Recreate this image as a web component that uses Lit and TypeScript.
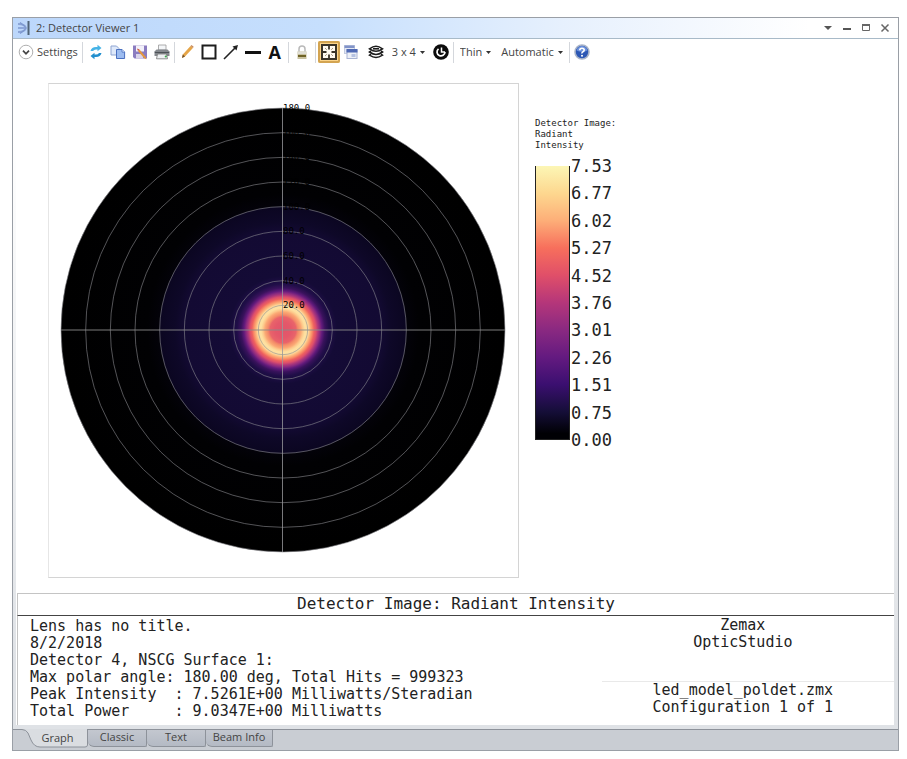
import { LitElement, html, css, svg } from "lit";
import { customElement } from "lit/decorators.js";

const CENTER_X = 234;
const CENTER_Y = 246;
const OUTER = 222;
const RINGS = [20, 40, 60, 80, 100, 120, 140, 160, 180];
const LEGEND = ["7.53", "6.77", "6.02", "5.27", "4.52", "3.76", "3.01", "2.26", "1.51", "0.75", "0.00"];

/* Radiant intensity by radius, as gradient stops over the polar plot. */
const PROFILE: Array<[number, string]> = [
  [0, "#e0556b"], [8, "#e4586a"], [13, "#e9646a"], [15, "#f38a68"], [18, "#fba874"],
  [20, "#fdca8c"], [22, "#fde0a0"], [25, "#fde0a2"], [27, "#fdb77c"], [29, "#fa9068"], [31, "#ee625f"],
  [33, "#dc4e6c"], [35, "#b0387a"], [37, "#8a2a80"], [39, "#611a7b"], [42, "#39125c"],
  [46, "#200e48"], [54, "#140b36"], [98, "#130a33"], [108, "#0e0828"], [123, "#0b0621"],
  [124, "#030209"], [136, "#010103"], [222, "#000000"],
];

const icon = (body: unknown, w = 16, h = 16) =>
  html`<svg width=${w} height=${h} viewBox="0 0 ${w} ${h}" aria-hidden="true">${body}</svg>`;

const icons = {
  app: icon(svg`
    <path d="M1 4q7 0 8 4q-1 4-8 4" fill="none" stroke="#8ba4d6" stroke-width="1.800"/>
    <path d="M1 8h8M3 2.500l5 4M3 13.500l5-4" stroke="#7d98d0" stroke-width="1.300" fill="none"/>
    <path d="M11.500 1v14" stroke="#4f6377" stroke-width="2"/>`),
  chevron: icon(svg`
    <circle cx="8" cy="8" r="6.8" fill="#fff" stroke="#b0b0b0"/>
    <path d="M5 6.600l3 3.200 3-3.200" fill="none" stroke="#444" stroke-width="1.700"/>`),
  refresh: icon(svg`
    <path d="M2.500 7q1-4 5.500-4h1.500V.8L13.500 4l-4 3.300V5.500H8Q6 5.500 5 7z" fill="#46b3e6"/>
    <path d="M13.500 9q-1 4-5.500 4H6.500v2.200L2.500 12l4-3.300v1.800H8q2 0 3-1.500z" fill="#218fce"/>`),
  copy: icon(svg`
    <path d="M1 2h5.500L9 4.500V11H1z" fill="#dfe9fa" stroke="#8fa5d2"/>
    <path d="M6.500 5.500H12l2.600 2.600V14.500H6.500z" fill="#9dbcf0" stroke="#4a70c0"/>
    <path d="M12 5.500v2.600h2.600" fill="#e9f1ff" stroke="#4a70c0" stroke-width=".8"/>`),
  save: icon(svg`
    <path d="M1 1.500h14v13H2.500L1 13z" fill="#8b7cc0"/>
    <rect x="4" y="1.500" width="8" height="6" fill="#f2f0fa"/>
    <rect x="4" y="10" width="7" height="4.500" fill="#d9d4ea"/>
    <path d="M7.500 5.500l6.300 7.500.6 2.200-2.200-1L6 7z" fill="#e6973d"/>
    <path d="M7.500 5.500L6 7 5 4.500z" fill="#c94b3a"/>`),
  print: icon(svg`
    <path d="M4.500 1h7.500v5h-7.500z" fill="#f4f6f8" stroke="#999" stroke-width=".8"/>
    <path d="M2.500 5.500h11l2 2v4.500H.5V7.500z" fill="#84888d"/>
    <path d="M.8 8h14.400v1H.8z" fill="#4d5257"/>
    <path d="M3.500 10h9l1 4.800h-11z" fill="#eef1f3" stroke="#777" stroke-width=".8"/>
    <circle cx="11.800" cy="12.500" r="1.100" fill="#3aa84b"/>`),
  pencil: icon(svg`
    <path d="M3 14l.8-3.400L11.500 2l2.400 1.900L6 12.500z" fill="#e5a548"/>
    <path d="M11.500 2l1-1 2.200 1.800-.8 1.100z" fill="#c88a5c"/>
    <path d="M3 14l.8-3.400L6 12.500z" fill="#71502c"/>`),
  box: icon(svg`<rect x="1.500" y="1.500" width="13" height="13" fill="none" stroke="#1d1d1d" stroke-width="2"/>`),
  arrow: icon(svg`
    <path d="M1 15L12 4" stroke="#222" stroke-width="1.600"/>
    <path d="M15 1l-1.500 5.500L9.500 2.500z" fill="#222"/>`),
  line: icon(svg`<path d="M0 8.500h16" stroke="#111" stroke-width="3"/>`),
  lock: icon(svg`
    <path d="M5 8V5q0-3 3-3t3 3v3" fill="none" stroke="#b9b9b9" stroke-width="1.500"/>
    <rect x="3.500" y="7.500" width="9" height="7.500" fill="#c9c2a0"/>
    <rect x="3.500" y="7.500" width="9" height="2.500" fill="#e0dfd6"/>
    <rect x="4" y="11" width="8" height="2" fill="#6f6326"/>`),
  fit: icon(svg`
    <rect x="1" y="1" width="14" height="14" fill="#fffaf0" stroke="#3b3428" stroke-width="2"/>
    <path d="M8 2v3.500M8 10.500V14M2 8h3.500M10.500 8H14" stroke="#3b3428" stroke-width="1.800"/>
    <path d="M4 4l1.800 1.800M12 4l-1.800 1.800M4 12l1.800-1.800M12 12l-1.800-1.800" stroke="#a89c82" stroke-width="1"/>`),
  cascade: icon(svg`
    <rect x="1.500" y="1.500" width="10" height="8" fill="#e3e8f4" stroke="#c3cbe0"/>
    <rect x="1.500" y="1.500" width="10" height="2.500" fill="#8193c8"/>
    <rect x="4" y="6" width="10" height="8.500" fill="#edf0f7" stroke="#a9b4d4"/>
    <rect x="3.500" y="5" width="11" height="3.500" fill="#4f69b4"/>
    <rect x="8.500" y="10" width="4" height="3" fill="#b5c2e2"/>`),
  layers: icon(svg`
    <g fill="#fff" stroke="#1c1c1c" stroke-width="1.600">
      <path d="M3 10l-1.500 1.200Q5 13.500 8 13.500t6.500-2.300L13 10"/>
      <path d="M3 7L1.500 8Q5 10.500 8 10.500T14.500 8L13 7"/>
      <path d="M1.500 4.800Q5 2.300 8 2.300t6.500 2.500Q11 7.300 8 7.300T1.500 4.800z"/>
    </g><path d="M5 4.800h6" stroke="#1c1c1c" stroke-width="1.600"/>`),
  reset: icon(svg`
    <circle cx="8" cy="8" r="7.800" fill="#0c0c0c"/>
    <path d="M5.500 4.800A4 4 0 1 0 12 8" fill="none" stroke="#fff" stroke-width="1.700"/>
    <path d="M8.500 3.500v4.500h3.500" fill="none" stroke="#fff" stroke-width="1.500"/>`),
  help: icon(svg`
    <circle cx="8" cy="8" r="7" fill="#2c57b4" stroke="#a9b4c8" stroke-width="1.600"/>
    <path d="M2.500 6.500Q4 2 8 2t5.500 4.500Q8 9 2.500 6.500z" fill="#6d92dc"/>
    <path d="M5.800 6.200q0-2 2.200-2t2.200 1.900q0 1.200-1.200 1.700T8 9.500" fill="none" stroke="#fff" stroke-width="1.600"/>
    <circle cx="8" cy="11.700" r="1" fill="#fff"/>`),
  menu: icon(svg`<path d="M1 4h8L5 8z" fill="#555"/>`, 10, 12),
  minimize: icon(svg`<path d="M1 7h8" stroke="#555" stroke-width="2"/>`, 10, 12),
  maximize: icon(svg`<path d="M1.500 2.500h7v6h-7z" fill="none" stroke="#666"/><path d="M1 3h8" stroke="#666" stroke-width="2"/>`, 10, 12),
  close: icon(svg`<path d="M1.500 2.500l7 7M8.500 2.500l-7 7" stroke="#666" stroke-width="1.500"/>`, 10, 12),
  caret: icon(svg`<path d="M0 1h5L2.500 4z" fill="#333"/>`, 5, 5),
};

@customElement("polar-plot")
export class PolarPlot extends LitElement {
  static styles = css`
    :host { display: block; border: 1px solid #d4d4d4; border-left-color: #e6e6e6; }
    svg { display: block; width: 100%; height: auto; }
    .grid { fill: none; stroke: #8a8a90; stroke-opacity: 0.6; stroke-width: 1; }
    .axis-h { stroke: #8a8a8a; stroke-opacity: 0.45; stroke-width: 2; }
    .axis-v { stroke: #97979b; stroke-opacity: 0.8; stroke-width: 1; }
    .tick { font: 9px "DejaVu Sans Mono", monospace; fill: #000; }
  `;

  render() {
    return html`
      <svg viewBox="0 0 469 493" role="img" aria-label="Radiant intensity over polar angle">
        <defs>
          <radialGradient id="profile">
            ${PROFILE.map(([r, c]) => svg`<stop offset=${r / OUTER} stop-color=${c} />`)}
          </radialGradient>
        </defs>
        <circle cx=${CENTER_X} cy=${CENTER_Y} r=${OUTER} fill="url(#profile)" />
        ${RINGS.map((deg) => svg`<circle class="grid" cx=${CENTER_X} cy=${CENTER_Y} r=${(deg / 180) * OUTER} />`)}
        <path class="axis-h" d="M12 246H456" />
        <path class="axis-v" d="M233.500 24V468" />
        ${RINGS.map((deg) => svg`<text class="tick" x=${CENTER_X} y=${CENTER_Y - (deg / 180) * OUTER + 3}>${deg.toFixed(1)}</text>`)}
      </svg>`;
  }
}

@customElement("app-root")
export class AppRoot extends LitElement {
  static styles = css`
    :host {
      display: flex; box-sizing: border-box; min-height: 100vh;
      padding: 17px 8px 8px 12px; background: #fff;
      font: 11px/16px "Open Sans", sans-serif; color: #444;
    }
    svg { display: block; flex: none; }
    button, select {
      appearance: none; border: 0; margin: 0; padding: 0; background: none;
      font: inherit; color: inherit; border-radius: 0;
    }
    .window { flex: 1; min-width: 0; display: flex; flex-direction: column; border: 1px solid #9a9fa6; }
    .titlebar {
      display: flex; align-items: center; height: 20px; padding: 0 8px 0 4px;
      border-bottom: 1px solid #a8bac8;
      background: linear-gradient(90deg, #bcd7fb, #c6dffd 35%, #e6f0fd 62%, #fff 90%);
    }
    .title { flex: 1; margin: 0 0 0 3px; font-size: 11px; font-weight: 400; }
    .controls { display: flex; gap: 9px; }
    .toolbar { display: flex; align-items: center; height: 26px; padding-left: 5px; }
    .settings { display: flex; align-items: center; gap: 3px; margin-right: 2px; }
    .tool { display: grid; place-items: center; width: 22px; height: 22px; }
    .tool.active { background: #fbd48a; box-shadow: inset 0 0 0 2px #d3a451; border-radius: 2px; }
    .letter { font: 700 18px/22px "Open Sans", sans-serif; color: #111; }
    .sep { width: 1px; height: 21px; margin: 0 2px; background: #d4d7dc; }
    .sep.tight { margin: 0 1px; }
    .group { display: flex; align-items: center; margin-left: 3px; }
    .drop { display: flex; align-items: center; gap: 4px; margin: 0 5px; }
    .drop select { field-sizing: content; }
    .body {
      flex: 1; display: flex; flex-direction: column;
      padding: 0 4px 4px 3px; background: linear-gradient(#fff 10%, #dfe2e6 90%);
    }
    .sheet { flex: 1; display: flex; flex-direction: column; background: #fff; color: #222; font-family: "DejaVu Sans Mono", monospace; }
    .view { flex: 1; display: flex; align-items: flex-start; padding: 18px 0 15px 32px; }
    .plot { flex: 0 1 469px; }
    .legend { margin: 35px 0 0 16px; }
    .legend-title { width: 92px; margin: 0; font-size: 9px; line-height: 11px; }
    .scale { display: flex; gap: 1px; margin-top: 15px; }
    .ramp {
      width: 33px; height: 273px; border: solid #222; border-width: 0 1px 1px;
      background: linear-gradient(#fcf6b5, #fdd78f 10%, #fdae78 20%, #f76f5c 30%, #e04f69 40%, #b5367a 50%, #8a2981 60%, #641a80 70%, #3b0f70 80%, #150e38 90%, #000004 98%);
    }
    .ticks {
      display: flex; flex-direction: column; justify-content: space-between;
      list-style: none; margin: -9px 0; padding: 0; font-size: 17px; line-height: 18px;
    }
    .caption {
      margin: 0 0 0 1px; border: solid #c4c4c4; border-width: 1px 0 0 1px;
      border-bottom: 1px solid #444; text-align: center;
      font-size: 16px; font-weight: 400; line-height: 20px; padding-bottom: 1px;
    }
    .facts { display: grid; grid-template-columns: 2fr 1fr; margin-left: 1px; font-size: 15px; line-height: 17px; }
    .report { margin: 0; padding: 2px 0 5px 12px; font: inherit; white-space: pre; border-left: 1px solid #c4c4c4; }
    .origin { display: flex; flex-direction: column; text-align: center; }
    .origin p { margin: 0; padding-right: 10px; }
    .maker { padding-top: 1px; height: 64px; }
    .file { border-top: 1px solid #e9e9e9; }
    .tabs { display: flex; height: 20px; border-top: 1px solid #8d929a; background: #c9cdd3; }
    .tab {
      box-sizing: border-box; height: 17px; width: 59px; text-align: center;
      border: solid #8d929a; border-width: 0 1px 1px 0; border-radius: 0 0 2px 6px;
      background: linear-gradient(#c3c7cf, #b4bac4); line-height: 14px; padding-bottom: 2px;
    }
    .tab.current { position: relative; width: 75px; padding-left: 14px; background: none; border-width: 0; }
    .tab.wide { width: 67px; }
    .tab-shape { position: absolute; left: 0; top: -1px; }
    .tab-label { position: relative; }
  `;

  private tool(name: string, glyph: unknown, active = false) {
    return html`<button class="tool ${active ? "active" : ""}" aria-label=${name}>${glyph}</button>`;
  }

  private drop(name: string, value: string) {
    return html`<label class="drop"><select aria-label=${name}><option>${value}</option></select>${icons.caret}</label>`;
  }

  render() {
    const sep = html`<span class="sep"></span>`;
    const tightSep = html`<span class="sep tight"></span>`;
    return html`
      <main class="window">
        <header class="titlebar">
          ${icons.app}
          <h1 class="title">2: Detector Viewer 1</h1>
          <div class="controls">
            <button aria-label="Window menu">${icons.menu}</button>
            <button aria-label="Minimize">${icons.minimize}</button>
            <button aria-label="Maximize">${icons.maximize}</button>
            <button aria-label="Close">${icons.close}</button>
          </div>
        </header>
        <div class="toolbar" role="toolbar">
          <button class="settings">${icons.chevron}<span>Settings</span></button>
          ${sep}
          ${this.tool("Refresh", icons.refresh)}${this.tool("Copy", icons.copy)}
          ${this.tool("Save", icons.save)}${this.tool("Print", icons.print)}
          ${tightSep}
          ${this.tool("Pencil", icons.pencil)}${this.tool("Rectangle", icons.box)}
          ${this.tool("Arrow", icons.arrow)}${this.tool("Line", icons.line)}
          ${this.tool("Text", html`<span class="letter">A</span>`)}
          ${sep}
          ${this.tool("Lock", icons.lock)}
          ${sep}
          ${this.tool("Fit", icons.fit, true)}${this.tool("Windows", icons.cascade)}
          <div class="group">
            ${this.tool("Layers", icons.layers)}
            ${this.drop("Grid", "3 x 4")}
            ${this.tool("Reset", icons.reset)}
          </div>
          ${tightSep}
          ${this.drop("Line width", "Thin")}${this.drop("Size", "Automatic")}
          ${tightSep}
          ${this.tool("Help", icons.help)}
        </div>
        <div class="body">
          <section class="sheet">
            <div class="view">
              <polar-plot class="plot"></polar-plot>
              <div class="legend">
                <p class="legend-title">Detector Image:<br />Radiant<br />Intensity</p>
                <div class="scale">
                  <div class="ramp"></div>
                  <ul class="ticks">${LEGEND.map((v) => html`<li>${v}</li>`)}</ul>
                </div>
              </div>
            </div>
            <h2 class="caption">Detector Image: Radiant Intensity</h2>
            <div class="facts">
              <pre class="report">${[
                "Lens has no title.",
                "8/2/2018",
                "Detector 4, NSCG Surface 1:",
                "Max polar angle: 180.00 deg, Total Hits = 999323",
                "Peak Intensity  : 7.5261E+00 Milliwatts/Steradian",
                "Total Power     : 9.0347E+00 Milliwatts",
              ].join("\n")}</pre>
              <div class="origin">
                <div class="maker"><p>Zemax</p><p>OpticStudio</p></div>
                <div class="file"><p>led_model_poldet.zmx</p><p>Configuration 1 of 1</p></div>
              </div>
            </div>
          </section>
        </div>
        <nav class="tabs" role="tablist">
          <button class="tab current" role="tab" aria-selected="true">
            <svg class="tab-shape" width="75" height="19" viewBox="0 0 75 19" aria-hidden="true">
              <path d="M0 0H74.500V16.500Q74.500 18 73 18H27Q21 18 18 11L15 4Q13 .5 9 .5H0z" fill="#c9cdd3"/>
              <path d="M9 0H74.500V16.500Q74.500 18 73 18H27Q21 18 18 11L15 4Q13 .5 9 .5z" fill="#dadde1"/>
              <path d="M0 .5H9Q13 .5 15 4L18 11Q21 18 27 18H72Q74.500 18 74.500 16V0" fill="none" stroke="#8d929a"/>
            </svg>
            <span class="tab-label">Graph</span>
          </button>
          <button class="tab" role="tab">Classic</button>
          <button class="tab" role="tab">Text</button>
          <button class="tab wide" role="tab">Beam Info</button>
        </nav>
      </main>`;
  }
}
